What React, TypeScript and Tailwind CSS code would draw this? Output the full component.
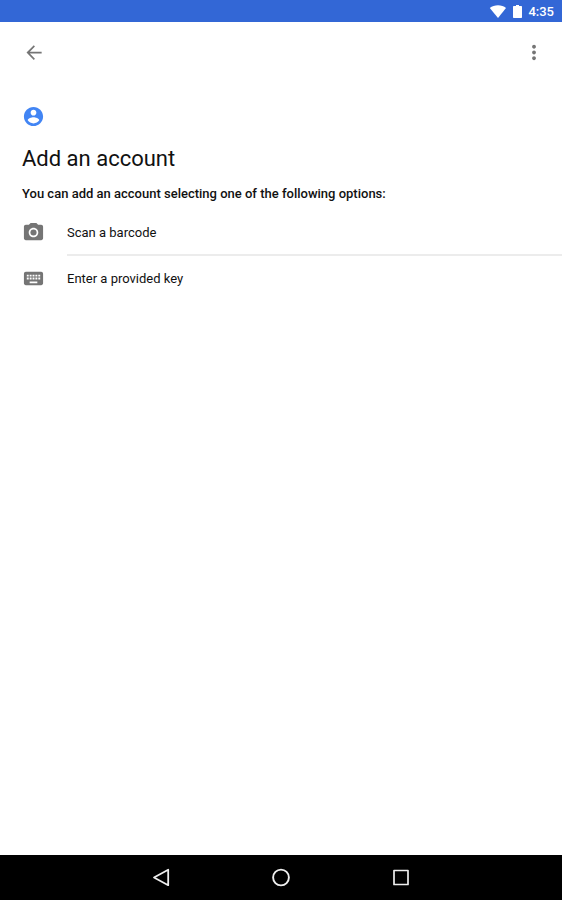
import type { ReactNode } from "react";

type IconProps = {
  className?: string;
  children: ReactNode;
};

function Icon({ className = "", children }: IconProps) {
  return (
    <svg viewBox="0 0 24 24" fill="currentColor" aria-hidden="true" className={`size-[23px] shrink-0 ${className}`}>
      {children}
    </svg>
  );
}

const options = [
  {
    label: "Scan a barcode",
    icon: (
      <>
        <circle cx="12" cy="12" r="3.2" />
        <path d="M9 2L7.17 4H4c-1.1 0-2 .9-2 2v12c0 1.1.9 2 2 2h16c1.1 0 2-.9 2-2V6c0-1.1-.9-2-2-2h-3.17L15 2H9zm3 15c-2.76 0-5-2.24-5-5s2.24-5 5-5 5 2.24 5 5-2.24 5-5 5z" />
      </>
    ),
  },
  {
    label: "Enter a provided key",
    icon: (
      <path d="M20 5H4c-1.1 0-1.99.9-1.99 2L2 17c0 1.1.9 2 2 2h16c1.1 0 2-.9 2-2V7c0-1.1-.9-2-2-2zm-9 3h2v2h-2V8zm0 3h2v2h-2v-2zM8 8h2v2H8V8zm0 3h2v2H8v-2zm-1 2H5v-2h2v2zm0-3H5V8h2v2zm9 7H8v-2h8v2zm0-4h-2v-2h2v2zm0-3h-2V8h2v2zm3 3h-2v-2h2v2zm0-3h-2V8h2v2z" />
    ),
  },
];

function StatusBar() {
  return (
    <div className="flex h-[22px] items-center justify-end bg-[#3367d6] pt-0.5 pr-2 text-white">
      <svg viewBox="0 0 17 14" fill="currentColor" aria-label="Wi-Fi" className="mr-1.5 h-3.5 w-[17px]">
        <path d="M9 13L.8 3C3 1.200 5.900.2 9 .2s6 1 8 2.800z" />
      </svg>
      <svg viewBox="0 0 10 14" fill="currentColor" aria-label="Battery" className="mr-1.5 h-3.5 w-2.5">
        <path d="M4 0h3v1h2.300c.4 0 .7.300.7.700v10.600c0 .4-.3.700-.7.700H1.700c-.4 0-.7-.3-.7-.7V1.700c0-.4.300-.7.700-.7H4z" />
      </svg>
      <span className="text-[13px] font-medium">4:35</span>
    </div>
  );
}

function NavigationBar() {
  return (
    <nav className="flex h-[45px] items-center justify-center gap-24 bg-black text-[#eeeeee]">
      <button type="button" aria-label="Back">
        <svg viewBox="0 0 24 24" fill="none" stroke="currentColor" strokeWidth="1.8" strokeLinejoin="round" className="size-6">
          <path d="M19.200 3.800v15.400L5 11.500z" />
        </svg>
      </button>
      <button type="button" aria-label="Home">
        <svg viewBox="0 0 24 24" fill="none" stroke="currentColor" strokeWidth="1.9" className="size-6">
          <circle cx="12" cy="11.500" r="7.900" />
        </svg>
      </button>
      <button type="button" aria-label="Recent apps">
        <svg viewBox="0 0 24 24" fill="none" stroke="currentColor" strokeWidth="1.7" strokeLinejoin="round" className="size-6">
          <path d="M5 4.500h14v14H5z" />
        </svg>
      </button>
    </nav>
  );
}

export default function App() {
  return (
    <div className="flex min-h-screen flex-col bg-white font-[Roboto,sans-serif] text-[#111111]">
      <StatusBar />

      {/* Toolbar */}
      <header className="flex h-[60px] items-center justify-between px-[22px] text-[#757575]">
        <button type="button" aria-label="Navigate up">
          <Icon>
            <path d="M20.500 11.100H8.200L13.500 5.700 12.300 4.500 4.700 12l7.600 7.700 1.200-1.200L8.200 13H20.500z" />
          </Icon>
        </button>
        <button type="button" aria-label="More options" className="-mr-1.5">
          <Icon>
            <path d="M11.500 8c1.100 0 2-.9 2-2s-.9-2-2-2-2 .9-2 2 .9 2 2 2zm0 2c-1.100 0-2 .9-2 2s.9 2 2 2 2-.9 2-2-.9-2-2-2zm0 6c-1.100 0-2 .9-2 2s.9 2 2 2 2-.9 2-2-.9-2-2-2z" />
          </Icon>
        </button>
      </header>

      <main className="flex-1 pt-[23px] pl-[22px]">
        <Icon className="text-[#4285f4]">
          <path d="M12 2C6.480 2 2 6.480 2 12s4.480 10 10 10 10-4.480 10-10S17.520 2 12 2zm0 3c1.660 0 3 1.340 3 3s-1.340 3-3 3-3-1.340-3-3 1.340-3 3-3zm0 14.200c-2.500 0-4.710-1.280-6-3.220.030-1.990 4-3.080 6-3.080 1.990 0 5.970 1.090 6 3.080-1.290 1.940-3.500 3.220-6 3.220z" />
        </Icon>
        <h1 className="mt-[15px] text-[22px] leading-8">Add an account</h1>
        <p className="mt-[9px] text-[13px] leading-5 font-medium">
          You can add an account selecting one of the following options:
        </p>

        <ul className="mt-1.5">
          {options.map((option, index) => (
            <li key={option.label}>
              <button type="button" className="flex h-11 w-full items-center pt-px text-left">
                <Icon className="text-[#757575]">{option.icon}</Icon>
                <span className="ml-[22px] pt-px text-[13px]">{option.label}</span>
              </button>
              {index < options.length - 1 && <hr className="ml-[45px] border-t-2 border-[#ececec]" />}
            </li>
          ))}
        </ul>
      </main>

      <NavigationBar />
    </div>
  );
}
